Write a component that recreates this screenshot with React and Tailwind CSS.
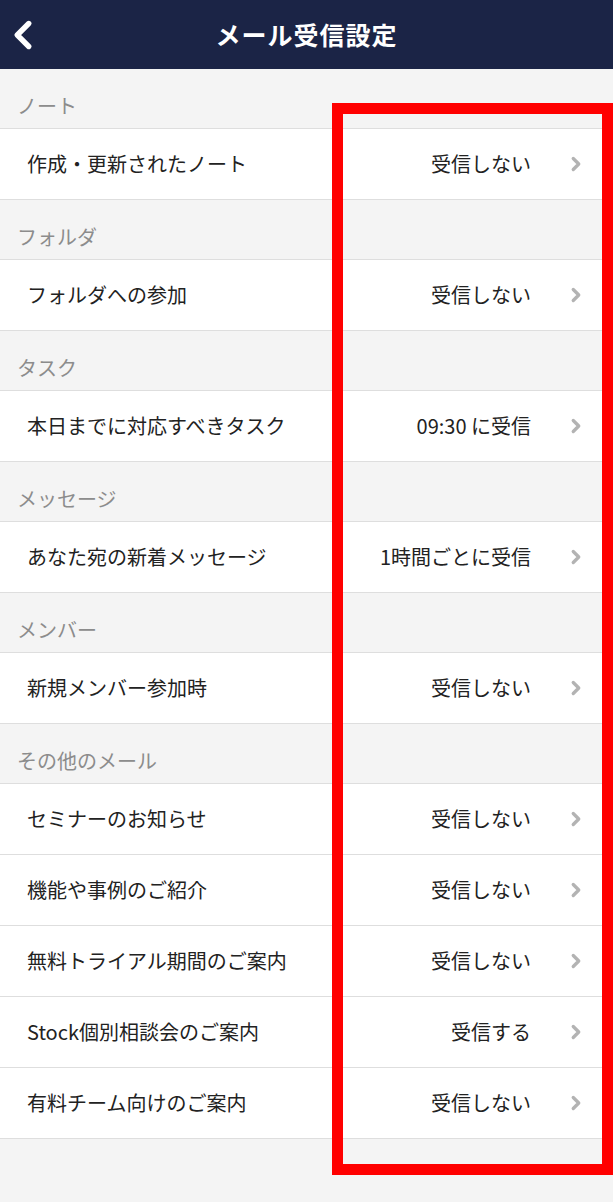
import React from "react";
import { ChevronLeft, ChevronRight } from "lucide-react";

const groups = [
  { title: "ノート", rows: [["作成・更新されたノート", "受信しない"]] },
  { title: "フォルダ", rows: [["フォルダへの参加", "受信しない"]] },
  { title: "タスク", rows: [["本日までに対応すべきタスク", "09:30 に受信"]] },
  { title: "メッセージ", rows: [["あなた宛の新着メッセージ", "1時間ごとに受信"]] },
  { title: "メンバー", rows: [["新規メンバー参加時", "受信しない"]] },
  {
    title: "その他のメール",
    rows: [
      ["セミナーのお知らせ", "受信しない"],
      ["機能や事例のご紹介", "受信しない"],
      ["無料トライアル期間のご案内", "受信しない"],
      ["Stock個別相談会のご案内", "受信する"],
      ["有料チーム向けのご案内", "受信しない"],
    ],
  },
];

const App = () => {
  return (
    <div
      className="relative w-[613px] h-[1202px] bg-[#f4f4f4] overflow-hidden"
      style={{ fontFamily: '"Noto Sans CJK JP", "Noto Sans", sans-serif' }}
    >
      <header className="relative h-[69px] bg-[#1b2446] flex items-center justify-center">
        <ChevronLeft
          size={46}
          strokeWidth={2.8}
          className="absolute left-[0px] top-[12px] text-white"
        />
        <h1 className="text-white text-[25px] font-bold tracking-[1px]">メール受信設定</h1>
      </header>

      {groups.map((group) => (
        <section key={group.title}>
          <div className="h-[59px] flex items-end pl-[17px] pb-[10px] text-[20px] leading-[24px] text-[#8c8c8c]">
            {group.title}
          </div>
          <div className="bg-white border-t border-[#dedede]">
            {group.rows.map(([label, value]) => (
              <div
                key={label}
                className="h-[71px] border-b border-[#dedede] flex items-center pl-[27px] pr-[26px]"
              >
                <span className="flex-1 text-[20px] text-[#222222]">{label}</span>
                <span className="text-[20px] text-[#222222]">{value}</span>
                <ChevronRight
                  size={22}
                  strokeWidth={3.6}
                  className="ml-[34px] text-[#b3b3b3]"
                />
              </div>
            ))}
          </div>
        </section>
      ))}

      <div className="absolute left-[332px] top-[103px] w-[281px] h-[1072px] border-[11px] border-[#ff0000]" />
    </div>
  );
};

export default App;
